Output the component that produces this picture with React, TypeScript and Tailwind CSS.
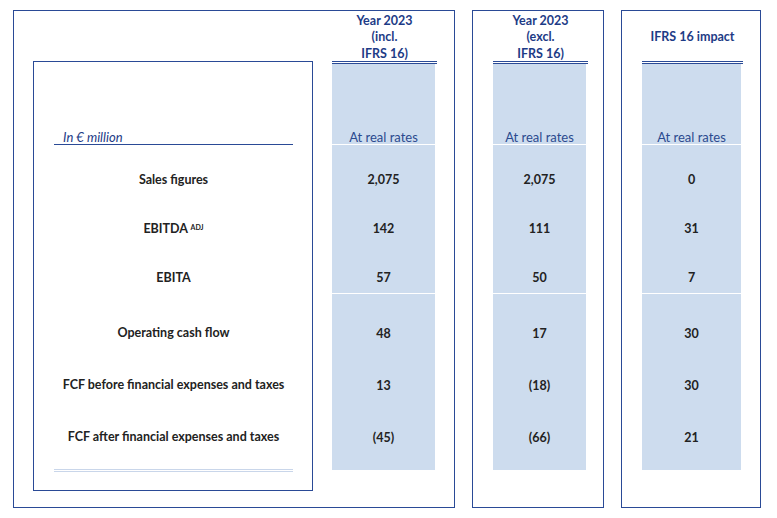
import React from 'react';

const font = { fontFamily: 'Lato, "Open Sans", sans-serif' };

const labels: React.ReactNode[] = [
  'Sales figures',
  <>
    EBITDA <sup className="text-[7px] font-bold">ADJ</sup>
  </>,
  'EBITA',
  'Operating cash flow',
  'FCF before financial expenses and taxes',
  'FCF after financial expenses and taxes',
];

interface ColumnProps {
  header: React.ReactNode;
  values: string[];
  width: string;
  single?: boolean;
}

const Column: React.FC<ColumnProps> = ({ header, values, width, single }) => (
  <div className={`${width} ml-[20px] flex flex-col`}>
    <div
      className={`h-[50px] flex justify-center text-center text-[12.5px] font-bold leading-[16.5px] text-[#1d3b86] ${
        single ? 'items-center pt-[3px]' : 'items-end translate-y-[1px]'
      }`}
    >
      {header}
    </div>
    <div className="h-[3px] border-y border-[#2a4a96]"></div>
    <div className="w-[calc(100%-2px)] bg-[#cddcee] flex flex-col">
      <div className="h-[80px] flex items-end justify-center text-[13px] leading-[14px] text-[#2b4a8f]">
        At real rates
      </div>
      <div className="h-[149px] border-t border-white flex flex-col items-center pt-[27px] gap-[33px] text-[12.5px] font-bold leading-[16px] text-[#222]">
        {values.slice(0, 3).map((v, i) => (
          <span key={i}>{v}</span>
        ))}
      </div>
      <div className="h-[177px] border-t border-white flex flex-col items-center pt-[32px] gap-[36px] text-[12.5px] font-bold leading-[16px] text-[#222]">
        {values.slice(3).map((v, i) => (
          <span key={i}>{v}</span>
        ))}
      </div>
    </div>
  </div>
);

export default function App() {
  return (
    <div className="w-[777px] h-[518px] bg-white pt-[10px] pl-[13px] flex gap-[17px]" style={font}>
      {/* left frame: labels + first column */}
      <div className="w-[442px] h-[498px] border border-[#2a4a96] flex">
        <div className="ml-[19px] mt-[50px] w-[280px] h-[430px] border border-[#2a4a96] flex flex-col">
          <div className="h-[82px] flex items-end pl-[29px] text-[13px] italic leading-[14px] text-[#1d3b86]">
            In € million
          </div>
          <div className="ml-[20px] w-[239px] border-t border-[#2a4a96]"></div>
          <div className="ml-[20px] w-[239px] h-[148px] flex flex-col items-center pt-[27px] gap-[33px] text-[12.5px] font-bold leading-[16px] text-[#222]">
            {labels.slice(0, 3).map((l, i) => (
              <span key={i}>{l}</span>
            ))}
          </div>
          <div className="ml-[20px] w-[239px] h-[176px] flex flex-col items-center pt-[32px] gap-[36px] text-[12.5px] font-bold leading-[16px] text-[#222]">
            {labels.slice(3).map((l, i) => (
              <span key={i}>{l}</span>
            ))}
          </div>
          <div className="ml-[20px] w-[239px] h-[3px] border-y border-[#c9d6ea]"></div>
        </div>
        <div className="-ml-[1px]">
          <Column
            width="w-[105px]"
            header={
              <span>
                Year 2023
                <br />
                (incl.
                <br />
                IFRS 16)
              </span>
            }
            values={['2,075', '142', '57', '48', '13', '(45)']}
          />
        </div>
      </div>

      <div className="w-[132px] h-[498px] border border-[#2a4a96] flex">
        <Column
          width="w-[95px]"
          header={
            <span>
              Year 2023
              <br />
              (excl.
              <br />
              IFRS 16)
            </span>
          }
          values={['2,075', '111', '50', '17', '(18)', '(66)']}
        />
      </div>

      <div className="w-[140px] h-[498px] border border-[#2a4a96] flex">
        <Column
          width="w-[101px]"
          single
          header={<span>IFRS 16 impact</span>}
          values={['0', '31', '7', '30', '30', '21']}
        />
      </div>
    </div>
  );
}
